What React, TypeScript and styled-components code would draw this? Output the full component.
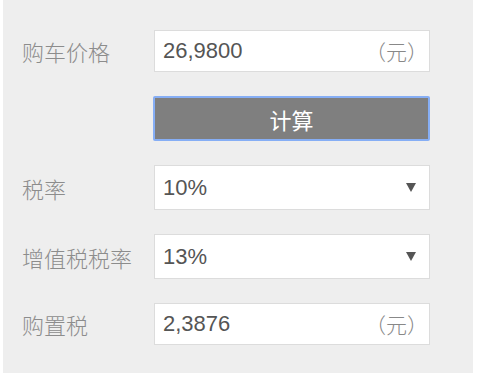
import styled, { createGlobalStyle } from "styled-components";

const GlobalStyle = createGlobalStyle`
  html, body {
    margin: 0;
    padding: 0;
    background: #ffffff;
  }
  body {
    font-family: "Liberation Sans", "Noto Sans CJK SC", sans-serif;
  }
`;

const Panel = styled.div`
  margin-left: 3px;
  width: 470px;
  height: 373px;
  background: #eeeeee;
  box-sizing: border-box;
  padding: 30px 0 0 19px;
  display: flex;
  flex-direction: column;
  gap: 24px;
`;

const Row = styled.div`
  display: flex;
  align-items: center;
`;

const Label = styled.div`
  width: 132px;
  font-size: 22px;
  color: #8c8c8c;
  font-family: "Noto Sans CJK SC", sans-serif;
  font-weight: 300;
  white-space: nowrap;
`;

const Field = styled.div<{ $h?: number }>`
  width: 276px;
  height: ${(p) => p.$h ?? 42}px;
  box-sizing: border-box;
  background: #ffffff;
  border: 1px solid #dcdcdc;
  display: flex;
  align-items: center;
  justify-content: space-between;
  padding: 0 12px 0 8px;
`;

const Value = styled.span`
  font-size: 22px;
  color: #555555;
  font-family: "Liberation Sans", sans-serif;
`;

const Unit = styled.span`
  font-size: 21px;
  color: #888888;
  font-family: "Noto Sans CJK SC", sans-serif;
  font-weight: 300;
  margin-right: -11px;
`;

const Arrow = styled.span`
  width: 0;
  height: 0;
  border-left: 5px solid transparent;
  border-right: 5px solid transparent;
  border-top: 9px solid #555555;
  margin-right: 1px;
`;

const Button = styled.button`
  margin-left: 131px;
  width: 277px;
  height: 45px;
  box-sizing: border-box;
  background: #7f7f7f;
  border: 2px solid #86aef5;
  border-radius: 2px;
  color: #ffffff;
  font-size: 22px;
  font-family: "Noto Sans CJK SC", sans-serif;
  padding: 0;
  cursor: pointer;
`;

export default function App() {
  return (
    <>
      <GlobalStyle />
      <Panel>
        <Row>
          <Label>购车价格</Label>
          <Field>
            <Value>26,9800</Value>
            <Unit>（元）</Unit>
          </Field>
        </Row>
        <Row>
          <Button>计算</Button>
        </Row>
        <Row>
          <Label>税率</Label>
          <Field $h={45}>
            <Value>10%</Value>
            <Arrow />
          </Field>
        </Row>
        <Row>
          <Label>增值税税率</Label>
          <Field $h={45}>
            <Value>13%</Value>
            <Arrow />
          </Field>
        </Row>
        <Row>
          <Label>购置税</Label>
          <Field>
            <Value>2,3876</Value>
            <Unit>（元）</Unit>
          </Field>
        </Row>
      </Panel>
    </>
  );
}
